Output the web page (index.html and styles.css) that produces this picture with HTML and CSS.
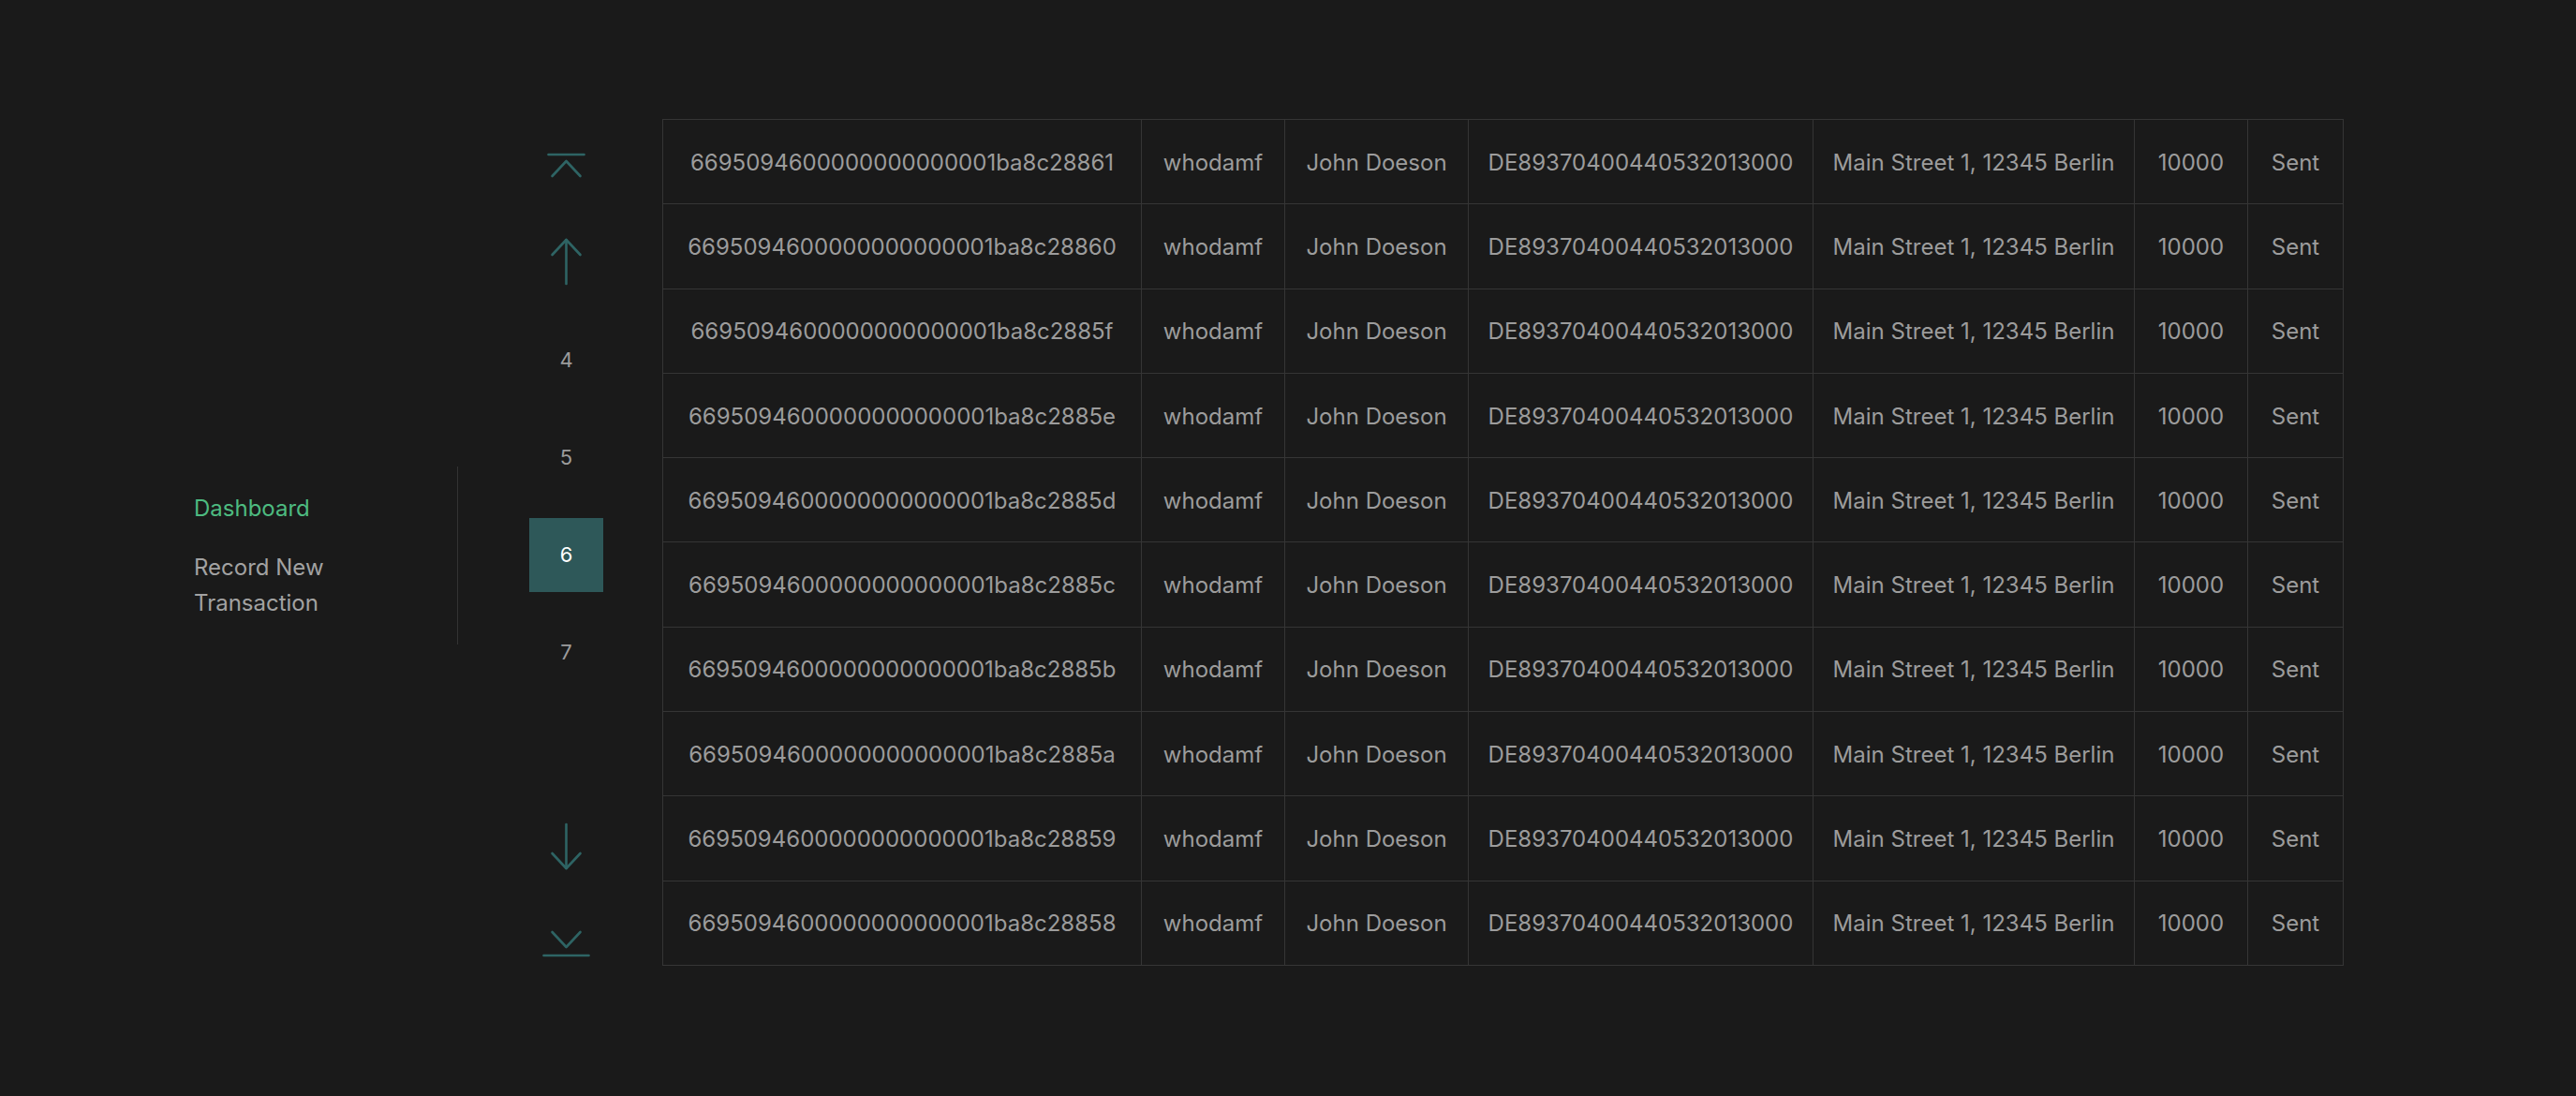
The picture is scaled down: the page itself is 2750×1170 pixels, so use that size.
FILE: index.html
```html
<!DOCTYPE html>
<html lang="en">
<head>
<meta charset="utf-8">
<title>Transactions</title>
<link rel="stylesheet" href="styles.css">
</head>
<body>
<div class="layout">
  <nav class="sidebar">
    <a class="nav-link active" href="#">Dashboard</a>
    <a class="nav-link" href="#">Record New Transaction</a>
  </nav>

  <div class="pager">
    <button class="pager-item" aria-label="First page">
      <svg width="79" height="104" viewBox="-39.5 -52 79 104" fill="none" stroke="currentColor" stroke-width="2.6" stroke-linecap="round" stroke-linejoin="round"><path d="M-19 -11 H19"/><path d="M-15 12 L0 -4 L15 12"/></svg>
    </button>
    <button class="pager-item" aria-label="Previous page">
      <svg width="79" height="104" viewBox="-39.5 -52 79 104" fill="none" stroke="currentColor" stroke-width="2.6" stroke-linecap="round" stroke-linejoin="round"><path d="M0 -24 V23"/><path d="M-15 -8 L0 -24 L15 -8"/></svg>
    </button>
    <button class="pager-item page">4</button>
    <button class="pager-item page">5</button>
    <button class="pager-item page current"><span class="page-box">6</span></button>
    <button class="pager-item page">7</button>
    <div class="pager-item spacer"></div>
    <button class="pager-item" aria-label="Next page">
      <svg width="79" height="104" viewBox="-39.5 -52 79 104" fill="none" stroke="currentColor" stroke-width="2.6" stroke-linecap="round" stroke-linejoin="round"><path d="M0 -24 V23"/><path d="M-15 7 L0 23 L15 7"/></svg>
    </button>
    <button class="pager-item" aria-label="Last page">
      <svg width="79" height="104" viewBox="-39.5 -52 79 104" fill="none" stroke="currentColor" stroke-width="2.6" stroke-linecap="round" stroke-linejoin="round"><path d="M-15 -13 L0 3 L15 -13"/><path d="M-24 12 H24"/></svg>
    </button>
  </div>

  <table class="tx-table">
    <colgroup>
      <col class="c-id"><col class="c-user"><col class="c-name"><col class="c-iban"><col class="c-addr"><col class="c-amt"><col class="c-status">
    </colgroup>
    <tbody>
      <tr><td>6695094600000000000001ba8c28861</td><td>whodamf</td><td>John Doeson</td><td>DE89370400440532013000</td><td>Main Street 1, 12345 Berlin</td><td>10000</td><td>Sent</td></tr>
      <tr><td>6695094600000000000001ba8c28860</td><td>whodamf</td><td>John Doeson</td><td>DE89370400440532013000</td><td>Main Street 1, 12345 Berlin</td><td>10000</td><td>Sent</td></tr>
      <tr><td>6695094600000000000001ba8c2885f</td><td>whodamf</td><td>John Doeson</td><td>DE89370400440532013000</td><td>Main Street 1, 12345 Berlin</td><td>10000</td><td>Sent</td></tr>
      <tr><td>6695094600000000000001ba8c2885e</td><td>whodamf</td><td>John Doeson</td><td>DE89370400440532013000</td><td>Main Street 1, 12345 Berlin</td><td>10000</td><td>Sent</td></tr>
      <tr><td>6695094600000000000001ba8c2885d</td><td>whodamf</td><td>John Doeson</td><td>DE89370400440532013000</td><td>Main Street 1, 12345 Berlin</td><td>10000</td><td>Sent</td></tr>
      <tr><td>6695094600000000000001ba8c2885c</td><td>whodamf</td><td>John Doeson</td><td>DE89370400440532013000</td><td>Main Street 1, 12345 Berlin</td><td>10000</td><td>Sent</td></tr>
      <tr><td>6695094600000000000001ba8c2885b</td><td>whodamf</td><td>John Doeson</td><td>DE89370400440532013000</td><td>Main Street 1, 12345 Berlin</td><td>10000</td><td>Sent</td></tr>
      <tr><td>6695094600000000000001ba8c2885a</td><td>whodamf</td><td>John Doeson</td><td>DE89370400440532013000</td><td>Main Street 1, 12345 Berlin</td><td>10000</td><td>Sent</td></tr>
      <tr><td>6695094600000000000001ba8c28859</td><td>whodamf</td><td>John Doeson</td><td>DE89370400440532013000</td><td>Main Street 1, 12345 Berlin</td><td>10000</td><td>Sent</td></tr>
      <tr><td>6695094600000000000001ba8c28858</td><td>whodamf</td><td>John Doeson</td><td>DE89370400440532013000</td><td>Main Street 1, 12345 Berlin</td><td>10000</td><td>Sent</td></tr>
    </tbody>
  </table>
</div>
</body>
</html>
```

FILE: styles.css
```css
* {
  box-sizing: border-box;
}

html, body {
  margin: 0;
  padding: 0;
  background: #1a1a1a;
}

body {
  font-family: Inter, "Noto Sans", "Liberation Sans", sans-serif;
  color: #9c9c9c;
  width: 2750px;
  height: 1170px;
  overflow: hidden;
}

.layout {
  display: flex;
  align-items: flex-start;
  padding: 124px 0 0 207px;
}

/* Sidebar */
.sidebar {
  width: 282px;
  flex: none;
  align-self: flex-start;
  margin-top: 374px;
  padding: 26px 80px 25px 0;
  border-right: 1px solid #333333;
  display: flex;
  flex-direction: column;
  gap: 25px;
}

.nav-link {
  display: block;
  font-size: 24px;
  line-height: 38px;
  color: #a2a2a2;
  text-decoration: none;
}

.nav-link.active {
  color: #4dbb80;
}

/* Pager */
.pager {
  flex: none;
  width: 79px;
  margin-left: 76px;
  display: flex;
  flex-direction: column;
}

.pager-item {
  display: flex;
  align-items: center;
  justify-content: center;
  width: 79px;
  height: 104px;
  padding: 0;
  border: 0;
  background: none;
  color: #2e6464;
  font-family: inherit;
  cursor: pointer;
}

.pager-item svg {
  display: block;
}

.pager-item.page {
  font-size: 22px;
  color: #9c9c9c;
}

.page-box {
  display: flex;
  align-items: center;
  justify-content: center;
  width: 79px;
  height: 79px;
  background: #2e5859;
  color: #ffffff;
}

/* Table */
.tx-table {
  flex: none;
  margin: 3px 0 0 63px;
  width: 1794px;
  border-collapse: collapse;
  table-layout: fixed;
  font-size: 24px;
  color: #9c9c9c;
  background: #1a1a1a;
}

.c-id { width: 511px; }
.c-user { width: 153px; }
.c-name { width: 196px; }
.c-iban { width: 368px; }
.c-addr { width: 343px; }
.c-amt { width: 121px; }
.c-status { width: 102px; }

.tx-table td {
  height: 90.3px;
  padding: 1px 0 0;
  border: 1px solid #353535;
  text-align: center;
  white-space: nowrap;
  vertical-align: middle;
}
```
